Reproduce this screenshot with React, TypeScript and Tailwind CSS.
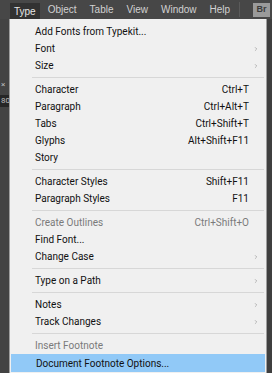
import { ChevronRight } from "lucide-react";

type Item =
  | { kind: "sep" }
  | { kind: "item"; label: string; shortcut?: string; sub?: boolean; disabled?: boolean; active?: boolean };

const items: Item[] = [
  { kind: "item", label: "Add Fonts from Typekit..." },
  { kind: "item", label: "Font", sub: true },
  { kind: "item", label: "Size", sub: true },
  { kind: "sep" },
  { kind: "item", label: "Character", shortcut: "Ctrl+T" },
  { kind: "item", label: "Paragraph", shortcut: "Ctrl+Alt+T" },
  { kind: "item", label: "Tabs", shortcut: "Ctrl+Shift+T" },
  { kind: "item", label: "Glyphs", shortcut: "Alt+Shift+F11" },
  { kind: "item", label: "Story" },
  { kind: "sep" },
  { kind: "item", label: "Character Styles", shortcut: "Shift+F11" },
  { kind: "item", label: "Paragraph Styles", shortcut: "F11" },
  { kind: "sep" },
  { kind: "item", label: "Create Outlines", shortcut: "Ctrl+Shift+O", disabled: true },
  { kind: "item", label: "Find Font..." },
  { kind: "item", label: "Change Case", sub: true },
  { kind: "sep" },
  { kind: "item", label: "Type on a Path", sub: true },
  { kind: "sep" },
  { kind: "item", label: "Notes", sub: true },
  { kind: "item", label: "Track Changes", sub: true },
  { kind: "sep" },
  { kind: "item", label: "Insert Footnote", disabled: true },
  { kind: "item", label: "Document Footnote Options...", active: true },
];

const menuBar = ["Object", "Table", "View", "Window", "Help"];

export default function App() {
  return (
    <div className="flex h-[373px] w-[272px] flex-col overflow-hidden bg-[#454545] font-['Roboto',sans-serif]">
      {/* menu bar */}
      <div className="flex h-[19px] shrink-0 items-center bg-[#474747] pl-[10px] font-['Liberation_Sans',sans-serif] text-[10px] text-[#d2d2d2]">
        <div className="flex h-[16px] items-center self-end bg-[#323232] px-[4px] text-[#e6e6e6]">Type</div>
        <div className="flex items-center gap-[13px] pl-[8px]">
          {menuBar.map((m) => (
            <div key={m}>{m}</div>
          ))}
        </div>
        <div className="ml-[9px] h-[15px] w-px bg-[#5a5a5a]" />
        <div className="ml-auto mr-[2px] flex h-[14px] w-[17px] items-center justify-center bg-[#9a9a9a] text-[9px] font-bold text-[#3a3a3a]">
          Br
        </div>
      </div>

      <div className="flex flex-1">
        {/* left strip from the panel behind */}
        <div className="flex w-[9px] shrink-0 flex-col bg-[#434343] pt-[60px] text-[8px] text-[#bdbdbd]">
          <div className="h-[12px] pl-[1px]">×</div>
          <div className="mt-[4px] h-[12px] bg-[#262626] pl-[1px]">80</div>
        </div>

        {/* dropdown */}
        <div className="flex flex-1 flex-col border-x border-[#9e9e9e] bg-[#f0f0f0] pt-[4px] text-[10px] text-[#111]">
          {items.map((it, i) =>
            it.kind === "sep" ? (
              <div key={i} className="flex h-[7px] shrink-0 items-center pl-[22px] pr-[2px]">
                <div className="h-px w-full bg-[#d7d7d7]" />
              </div>
            ) : (
              <div
                key={i}
                className={`flex shrink-0 items-center pl-[25px] pr-[7px] ${it.active ? "mx-[1px] h-[18px] bg-[#91c9f7] pl-[24px]" : "h-[17px]"} ${it.disabled ? "text-[#7a7a7a]" : ""}`}
              >
                <span>{it.label}</span>
                <span className="ml-auto pr-[4px]">{it.shortcut}</span>
                <span className="flex w-[6px] justify-end">
                  {it.sub && <ChevronRight size={8} strokeWidth={1.5} className="text-[#555]" />}
                </span>
              </div>
            )
          )}
        </div>

        <div className="w-[5px] shrink-0 bg-[#3f3f3f]" />
      </div>
    </div>
  );
}
